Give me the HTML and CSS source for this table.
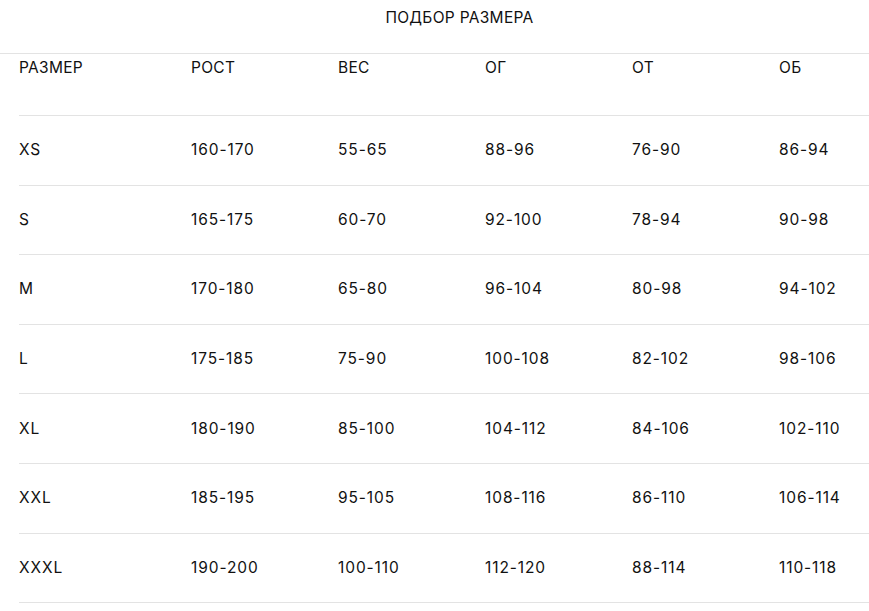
FILE: index.html
```html
<!DOCTYPE html>
<html lang="ru">
<head>
<meta charset="utf-8">
<title>Подбор размера</title>
<link rel="stylesheet" href="styles.css">
</head>
<body>
<div class="page">
  <div class="title">ПОДБОР РАЗМЕРА</div>
  <div class="table">
    <div class="row head"><div>РАЗМЕР</div><div>РОСТ</div><div>ВЕС</div><div>ОГ</div><div>ОТ</div><div>ОБ</div></div>
    <div class="row"><div>XS</div><div>160-170</div><div>55-65</div><div>88-96</div><div>76-90</div><div>86-94</div></div>
    <div class="row"><div>S</div><div>165-175</div><div>60-70</div><div>92-100</div><div>78-94</div><div>90-98</div></div>
    <div class="row"><div>M</div><div>170-180</div><div>65-80</div><div>96-104</div><div>80-98</div><div>94-102</div></div>
    <div class="row"><div>L</div><div>175-185</div><div>75-90</div><div>100-108</div><div>82-102</div><div>98-106</div></div>
    <div class="row"><div>XL</div><div>180-190</div><div>85-100</div><div>104-112</div><div>84-106</div><div>102-110</div></div>
    <div class="row"><div>XXL</div><div>185-195</div><div>95-105</div><div>108-116</div><div>86-110</div><div>106-114</div></div>
    <div class="row"><div>XXXL</div><div>190-200</div><div>100-110</div><div>112-120</div><div>88-114</div><div>110-118</div></div>
  </div>
</div>
</body>
</html>
```
FILE: styles.css
```css
html, body {
  margin: 0;
  padding: 0;
  background: #fff;
}
.page {
  font-family: Inter, "Noto Sans", sans-serif;
  font-size: 15.5px;
  letter-spacing: 0.3px;
  color: #111;
  width: 869px;
}
.title {
  box-sizing: border-box;
  height: 54px;
  padding: 8px 0 0 50px;
  line-height: 20px;
  text-align: center;
  border-bottom: 1px solid #e3e3e3;
}
.table {
  margin-left: 19px;
}
.row {
  display: grid;
  grid-template-columns: 172px 147px 147px 147px 147px 1fr;
  box-sizing: border-box;
  height: 69.6px;
  align-items: center;
  line-height: 20px;
  letter-spacing: 0.9px;
  border-bottom: 1px solid #e3e3e3;
}
.row.head {
  height: 62px;
  align-items: start;
  padding-top: 4px;
  letter-spacing: 0.3px;
}
```
